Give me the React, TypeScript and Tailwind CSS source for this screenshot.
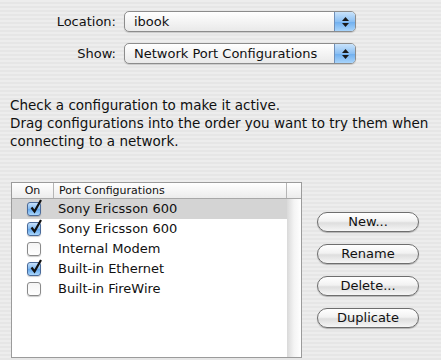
import React from "react";

const rows = [
  { name: "Sony Ericsson 600", on: true, selected: true },
  { name: "Sony Ericsson 600", on: true },
  { name: "Internal Modem", on: false },
  { name: "Built-in Ethernet", on: true },
  { name: "Built-in FireWire", on: false },
];

function PopUp({ value }: { value: string }) {
  return (
    <div className="flex h-[21px] w-[232px] overflow-hidden rounded-[5px] border border-[#8c8c8c] bg-[linear-gradient(#ffffff,#f4f4f4_50%,#e9e9e9)] shadow-[0_1px_1px_rgba(0,0,0,0.15)]">
      <div className="flex-1 pl-[9px] text-[13px] leading-[19px] text-[#111]">{value}</div>
      <div className="flex w-[21px] flex-col items-center justify-center gap-[2px] border-l border-[#6f8fb8] bg-[linear-gradient(#c9e3fb,#8cc0f3_50%,#6eaeef_51%,#a8d4fb)]">
        <svg width="7" height="4" viewBox="0 0 7 4">
          <path d="M3.5 0 L7 4 L0 4 Z" fill="#1a1a1a" />
        </svg>
        <svg width="7" height="4" viewBox="0 0 7 4">
          <path d="M0 0 L7 0 L3.5 4 Z" fill="#1a1a1a" />
        </svg>
      </div>
    </div>
  );
}

function Check({ on }: { on: boolean }) {
  if (!on)
    return (
      <div className="h-[14px] w-[14px] rounded-[3px] border border-[#8a8a8a] bg-[linear-gradient(#f4f4f4,#ffffff)] shadow-[0_1px_1px_rgba(0,0,0,0.2)]" />
    );
  return (
    <div className="relative h-[14px] w-[14px] rounded-[3px] border border-[#4a6a99] bg-[linear-gradient(#c6e1fb,#7fb8f0_50%,#62a6ec_51%,#aad6fb)] shadow-[0_1px_1px_rgba(0,0,0,0.2)]">
      <svg className="absolute left-[1px] top-[-4px]" width="14" height="15" viewBox="0 0 14 15">
        <path d="M2.5 8.5 L5.5 12.5 L12 1" stroke="#111" strokeWidth="2.2" fill="none" strokeLinejoin="miter" />
      </svg>
    </div>
  );
}

function AquaButton({ label }: { label: string }) {
  return (
    <div className="flex h-[20px] items-center justify-center rounded-full border border-[#6e6e6e] bg-[linear-gradient(#ffffff,#f2f2f2_45%,#dedede_55%,#f6f6f6)] text-[13px] text-[#111] shadow-[0_1px_1px_rgba(0,0,0,0.25)]">
      {label}
    </div>
  );
}

export default function App() {
  return (
    <div
      className="h-[360px] w-[441px] overflow-hidden bg-[repeating-linear-gradient(#ededed_0px,#ededed_2px,#e6e6e6_2px,#e6e6e6_4px)] text-[#111]"
      style={{ fontFamily: '"Lucida Grande", "DejaVu Sans", sans-serif' }}
    >
      {/* pop-ups */}
      <div className="flex flex-col gap-[11px] pt-[11px]">
        <div className="flex items-center gap-[8px]">
          <div className="w-[116px] text-right text-[13px]">Location:</div>
          <PopUp value="ibook" />
        </div>
        <div className="flex items-center gap-[8px]">
          <div className="w-[116px] text-right text-[13px]">Show:</div>
          <PopUp value="Network Port Configurations" />
        </div>
      </div>

      {/* instructions */}
      <div className="mt-[32px] px-[10px] text-[13.5px] leading-[18px]">
        <p>Check a configuration to make it active.</p>
        <p>Drag configurations into the order you want to try them when connecting to a network.</p>
      </div>

      {/* table + buttons */}
      <div className="mt-[32px] flex">
        <div className="ml-[11px] flex h-[176px] w-[291px] flex-col border border-[#9b9b9b] bg-white">
          <div className="flex h-[16px] border-b border-[#a8a8a8] bg-[linear-gradient(#ffffff,#ececec)] text-[11px] leading-[15px]">
            <div className="w-[42px] border-r border-[#b5b5b5] text-center">On</div>
            <div className="w-[233px] border-r border-[#b5b5b5] pl-[5px]">Port Configurations</div>
            <div className="flex-1" />
          </div>
          <div className="flex flex-1">
            <div className="w-[275px]">
              {rows.map((r, i) => (
                <div
                  key={i}
                  className={`flex h-[20px] items-center ${r.selected ? "bg-[#d4d4d4]" : ""}`}
                >
                  <div className="flex w-[42px] justify-center pl-[2px]">
                    <Check on={r.on} />
                  </div>
                  <div className="pl-[4px] text-[13px]">{r.name}</div>
                </div>
              ))}
            </div>
            <div className="flex-1 bg-[linear-gradient(90deg,#d9d9d9,#f4f4f4_50%,#ffffff)]" />
          </div>
        </div>

        <div className="ml-[15px] flex w-[102px] flex-col gap-[12px] pt-[30px]">
          <AquaButton label="New..." />
          <AquaButton label="Rename" />
          <AquaButton label="Delete..." />
          <AquaButton label="Duplicate" />
        </div>
      </div>
    </div>
  );
}
